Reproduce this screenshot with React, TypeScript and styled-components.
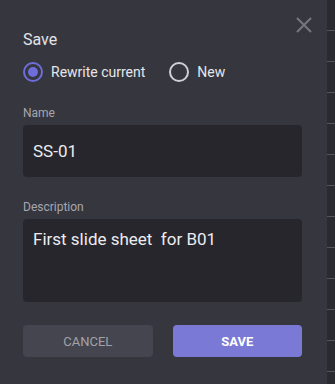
import React, { useState } from 'react';
import styled, { createGlobalStyle } from 'styled-components';

const GlobalStyle = createGlobalStyle`
  html, body {
    margin: 0;
    padding: 0;
    background: #1f1f25;
    font-family: Roboto, "Liberation Sans", sans-serif;
  }
`;

const Screen = styled.div`
  width: 335px;
  height: 384px;
  display: flex;
  background: #1f1f25;
  overflow: hidden;
`;

const Dialog = styled.div`
  width: 327px;
  height: 384px;
  box-sizing: border-box;
  padding: 30px 25px 0 23px;
  background: #36363f;
  position: relative;
  display: flex;
  flex-direction: column;
`;

const SideStrip = styled.div`
  flex: 1;
  background: repeating-linear-gradient(
    to bottom,
    #2a2a31 0px,
    #2a2a31 30px,
    #55555e 30px,
    #55555e 31px
  );
`;

const Close = styled.button`
  position: absolute;
  top: 16px;
  right: 14px;
  width: 18px;
  height: 18px;
  padding: 0;
  border: none;
  background: none;
  cursor: pointer;
`;

const Title = styled.h2`
  margin: 0;
  font-size: 16px;
  font-weight: 400;
  color: #e4e4e8;
  line-height: 19px;
`;

const RadioRow = styled.div`
  display: flex;
  gap: 24px;
  margin-top: 13px;
`;

const RadioOption = styled.label`
  display: flex;
  align-items: center;
  gap: 8px;
  font-size: 14px;
  color: #e6e6ea;
  cursor: pointer;
`;

const RadioCircle = styled.span<{ $checked: boolean }>`
  width: 20px;
  height: 20px;
  box-sizing: border-box;
  border-radius: 50%;
  border: 2px solid ${(p) => (p.$checked ? '#6d6ddb' : '#d0d0d4')};
  display: flex;
  align-items: center;
  justify-content: center;
  &::after {
    content: '';
    width: 10px;
    height: 10px;
    border-radius: 50%;
    background: #6d6ddb;
    display: ${(p) => (p.$checked ? 'block' : 'none')};
  }
`;

const Label = styled.div<{ $top: number }>`
  margin-top: ${(p) => p.$top}px;
  font-size: 12px;
  color: #a6a6ae;
  line-height: 14px;
`;

const Field = styled.div<{ $height: number }>`
  margin-top: 5px;
  height: ${(p) => p.$height}px;
  box-sizing: border-box;
  background: #26262c;
  border-radius: 4px;
  padding: 0 10px;
  font-size: 17px;
  color: #ececf0;
`;

const NameField = styled(Field)`
  display: flex;
  align-items: center;
`;

const DescField = styled(Field)`
  padding-top: 10px;
  line-height: 20px;
  white-space: pre;
`;

const Actions = styled.div`
  display: flex;
  gap: 20px;
  margin-top: 23px;
`;

const Button = styled.button<{ $primary?: boolean }>`
  flex: 1;
  height: 32px;
  border: none;
  border-radius: 4px;
  font-family: Roboto, "Liberation Sans", sans-serif;
  font-size: 13px;
  font-weight: ${(p) => (p.$primary ? 700 : 400)};
  color: ${(p) => (p.$primary ? '#ffffff' : '#a2a2aa')};
  background: ${(p) => (p.$primary ? '#7a7ad6' : '#45454f')};
  cursor: pointer;
`;

export default function App() {
  const [mode, setMode] = useState<'rewrite' | 'new'>('rewrite');
  return (
    <>
      <GlobalStyle />
      <Screen>
        <Dialog>
          <Close aria-label="close">
            <svg width="18" height="18" viewBox="0 0 18 18">
              <path d="M2 2 L16 16 M16 2 L2 16" stroke="#76767f" strokeWidth="2" />
            </svg>
          </Close>
          <Title>Save</Title>
          <RadioRow>
            <RadioOption onClick={() => setMode('rewrite')}>
              <RadioCircle $checked={mode === 'rewrite'} />
              Rewrite current
            </RadioOption>
            <RadioOption onClick={() => setMode('new')}>
              <RadioCircle $checked={mode === 'new'} />
              New
            </RadioOption>
          </RadioRow>
          <Label $top={24}>Name</Label>
          <NameField $height={52}>SS-01</NameField>
          <Label $top={23}>Description</Label>
          <DescField $height={83}>First slide sheet  for B01</DescField>
          <Actions>
            <Button>CANCEL</Button>
            <Button $primary>SAVE</Button>
          </Actions>
        </Dialog>
        <SideStrip />
      </Screen>
    </>
  );
}
